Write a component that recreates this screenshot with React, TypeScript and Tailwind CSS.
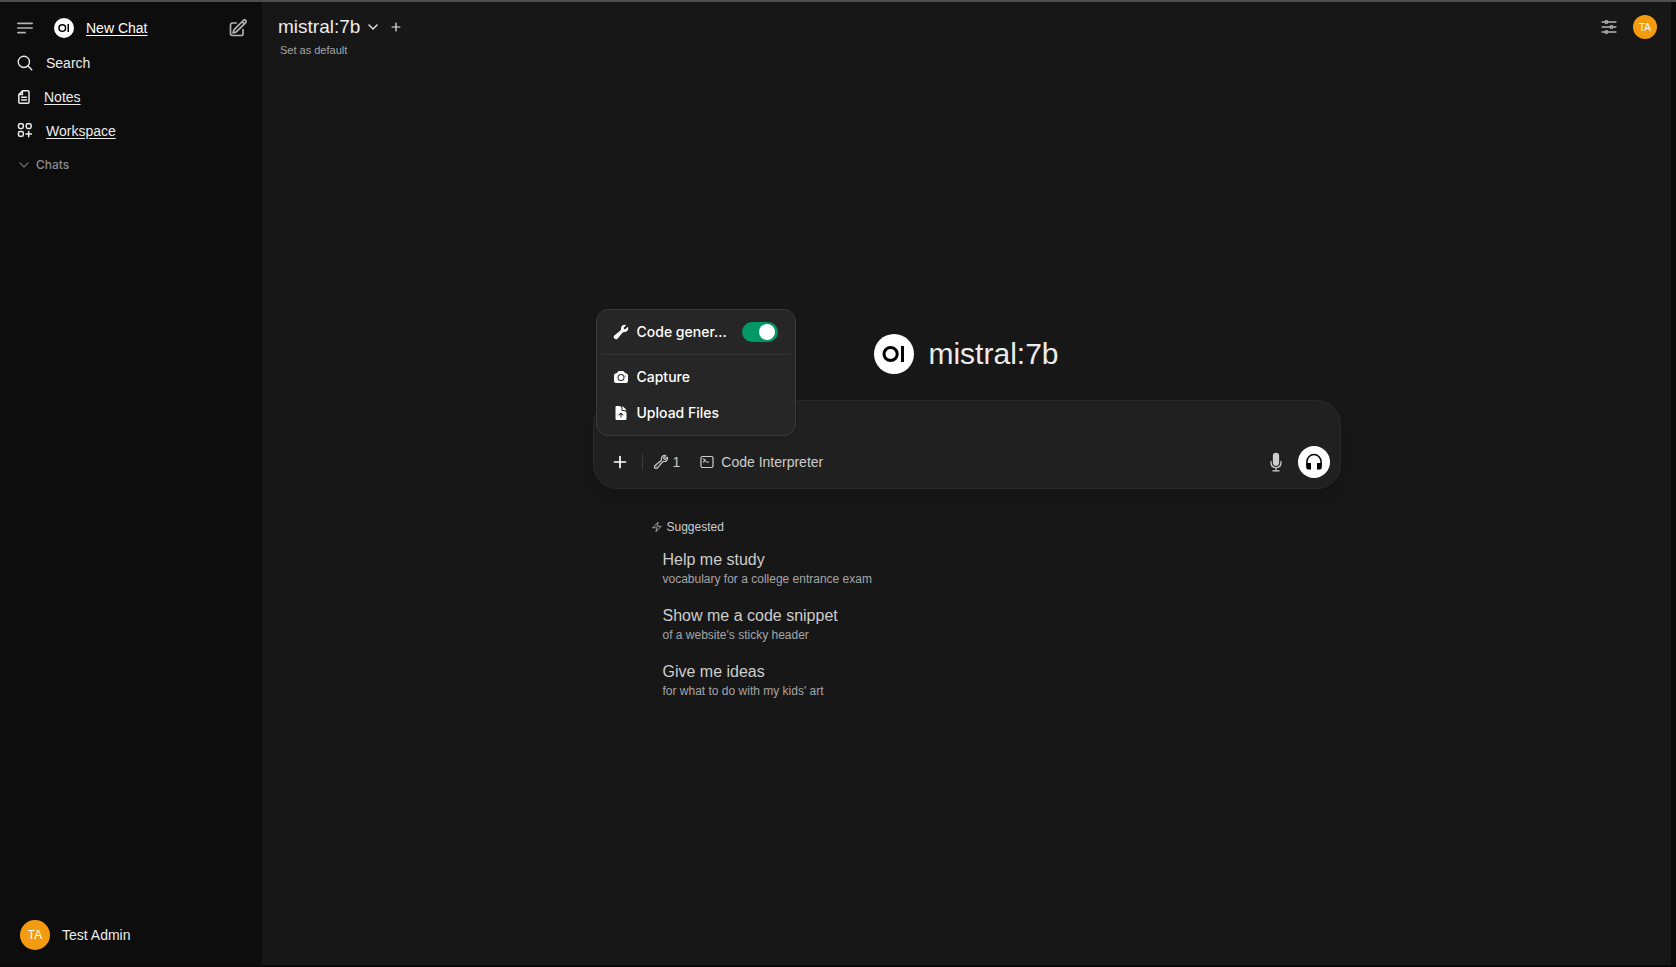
import { useState, type ReactNode } from 'react';
import {
  HiCamera,
  HiDocumentArrowUp,
  HiMicrophone,
  HiOutlineAdjustmentsHorizontal,
  HiOutlineBolt,
  HiOutlineCommandLine,
  HiOutlineMagnifyingGlass,
  HiOutlinePencilSquare,
  HiOutlineWrench,
} from 'react-icons/hi2';

function Logo({ className }: { className: string }) {
  return (
    <svg viewBox="0 0 40 40" className={className} aria-hidden="true">
      <circle cx="20" cy="20" r="20" fill="#fff" />
      <circle cx="16.6" cy="20" r="6.6" fill="none" stroke="#000" strokeWidth="3" />
      <rect x="27" y="12" width="3" height="16" fill="#000" />
    </svg>
  );
}

function MenuIcon() {
  return (
    <svg viewBox="0 0 20 20" className="size-5" fill="none" stroke="currentColor" strokeWidth="1.6" strokeLinecap="round" aria-hidden="true">
      <path d="M2.8 5.4h14.4M2.8 10h14.4M2.8 14.6h7.4" />
    </svg>
  );
}

function NoteIcon() {
  return (
    <svg viewBox="0 0 16 16" className="size-4" fill="none" stroke="currentColor" strokeWidth="1.5" strokeLinecap="round" strokeLinejoin="round" aria-hidden="true">
      <path d="M2.8 5.6 6.6 1.8h5.2a1.2 1.2 0 0 1 1.2 1.2v10a1.2 1.2 0 0 1-1.2 1.2H4A1.2 1.2 0 0 1 2.8 13zM6.4 2v3.6H3M5.6 8.3h4.8M5.6 11h4.8" />
    </svg>
  );
}

function WorkspaceIcon() {
  return (
    <svg viewBox="0 0 18 18" className="size-[18px]" fill="none" stroke="currentColor" strokeWidth="1.5" strokeLinecap="round" aria-hidden="true">
      <rect x="2.5" y="1.7" width="4.8" height="4.8" rx="1.4" />
      <rect x="10.3" y="1.7" width="4.8" height="4.8" rx="1.4" />
      <rect x="2.5" y="9.5" width="4.8" height="4.8" rx="1.4" />
      <path d="M12.7 9.4v5.4M10 12.1h5.4" />
    </svg>
  );
}

function WrenchSolidIcon() {
  return (
    <svg viewBox="0 0 20 20" className="size-4" fill="currentColor" aria-hidden="true">
      <path d="M19 5.5a4.5 4.5 0 0 1-4.791 4.49c-.873-.055-1.808.128-2.368.8l-6.024 7.23a2.724 2.724 0 1 1-3.837-3.837L9.21 8.16c.672-.56.855-1.495.8-2.368a4.5 4.5 0 0 1 5.873-4.575c.324.105.39.51.15.752L13.34 4.66a.455.455 0 0 0-.11.494 3.01 3.01 0 0 0 1.617 1.617c.17.07.363.02.493-.111l2.692-2.692c.241-.241.647-.174.752.15.14.435.216.9.216 1.382Z" />
    </svg>
  );
}

function HeadphonesIcon() {
  return (
    <svg viewBox="0 0 20 20" className="size-5" aria-hidden="true">
      <path d="M2.9 13V9.7a7.1 7.1 0 0 1 14.2 0V13" fill="none" stroke="currentColor" strokeWidth="1.5" />
      <path d="M2.2 11h4.8v6.4H4.2a2 2 0 0 1-2-2zM17.8 11H13v6.4h2.8a2 2 0 0 0 2-2z" fill="currentColor" />
    </svg>
  );
}

function ChevronIcon({ className }: { className: string }) {
  return (
    <svg viewBox="0 0 12 12" className={className} fill="none" stroke="currentColor" strokeWidth="1.4" strokeLinecap="round" strokeLinejoin="round" aria-hidden="true">
      <path d="M2 4l4 4 4-4" />
    </svg>
  );
}

function PlusIcon({ className }: { className: string }) {
  return (
    <svg viewBox="0 0 14 14" className={className} fill="none" stroke="currentColor" strokeWidth="1.7" strokeLinecap="round" aria-hidden="true">
      <path d="M7 1.5v11M1.5 7h11" />
    </svg>
  );
}

function Sidebar() {
  return (
    <aside className="flex w-[262px] shrink-0 flex-col bg-[#0d0d0d] pt-2 text-sm text-[#ececec]">
      <div className="flex h-9 items-center pl-[15px] pr-3.5">
        <button aria-label="Toggle sidebar" className="text-[#b4b4b4]">
          <MenuIcon />
        </button>
        <a href="#new" className="ml-[19px] flex items-center gap-3 text-white">
          <Logo className="size-5" />
          <span className="underline underline-offset-2">New Chat</span>
        </a>
        <button aria-label="Edit" className="ml-auto text-[#b4b4b4]">
          <HiOutlinePencilSquare className="size-5" strokeWidth="2" />
        </button>
      </div>
      <nav className="flex flex-col px-4">
        <button className="flex h-[34px] items-center gap-3 text-left">
          <HiOutlineMagnifyingGlass className="size-[18px]" strokeWidth="1.8" />
          Search
        </button>
        <a href="#notes" className="flex h-[34px] items-center gap-3 underline underline-offset-2">
          <NoteIcon />
          Notes
        </a>
        <a href="#workspace" className="flex h-[34px] items-center gap-3 underline underline-offset-2">
          <WorkspaceIcon />
          Workspace
        </a>
      </nav>
      <button className="flex h-[34px] items-center gap-1.5 px-[18px] font-['Inter',sans-serif] text-xs font-medium text-[#8e8e8e]">
        <ChevronIcon className="size-3 text-[#676767]" />
        Chats
      </button>
      <button className="mt-auto flex items-center gap-3 px-5 pb-[15px]">
        <span className="flex size-[30px] items-center justify-center rounded-full bg-[#f39c12] text-xs text-white">TA</span>
        Test Admin
      </button>
    </aside>
  );
}

function MenuItem({ icon, children }: { icon: ReactNode; children: ReactNode }) {
  return (
    <button className="flex h-9 items-center gap-2 rounded-lg px-3">
      {icon}
      {children}
    </button>
  );
}

function ToolMenu() {
  const [enabled, setEnabled] = useState(true);
  return (
    <div className="absolute bottom-[52px] left-0.5 flex w-[200px] flex-col rounded-xl border border-[#3a3a3a] bg-[#262626] p-1 font-['Inter',sans-serif] text-sm font-medium text-white shadow-sm">
      <label className="flex h-9 items-center gap-2 pl-3 pr-[13px]">
        <WrenchSolidIcon />
        <span className="flex-1 whitespace-nowrap">Code gener…</span>
        <input
          type="checkbox"
          role="switch"
          checked={enabled}
          onChange={(e) => setEnabled(e.target.checked)}
          className="peer sr-only"
        />
        <span className="flex h-5 w-9 items-center rounded-full bg-[#444] px-[3px] peer-checked:justify-end peer-checked:bg-[#009966]">
          <span className="size-4 rounded-full bg-white" />
        </span>
      </label>
      <hr className="my-1 border-[#333]" />
      <MenuItem icon={<HiCamera className="size-4" />}>Capture</MenuItem>
      <MenuItem icon={<HiDocumentArrowUp className="size-4" />}>Upload Files</MenuItem>
    </div>
  );
}

function Composer() {
  return (
    <form className="relative flex w-full flex-col rounded-3xl border border-[#292929] bg-[#202020] shadow-lg" onSubmit={(e) => e.preventDefault()}>
      <textarea aria-label="Message" rows={1} className="mx-4 mt-[9px] h-9 resize-none bg-transparent text-base text-white outline-none" />
      <div className="mb-2.5 flex items-center pl-[19px] pr-2.5 text-sm text-[#cdcdcd]">
        <button type="button" aria-label="More" className="text-white">
          <PlusIcon className="size-3.5" />
        </button>
        <span className="ml-[15px] h-4 w-px bg-[#3a3a3a]" />
        <button type="button" aria-label="Tools" className="ml-2.5 flex items-center gap-1">
          <HiOutlineWrench className="size-4" strokeWidth="1.8" />
          1
        </button>
        <button type="button" className="ml-[19px] flex items-center gap-1.5">
          <HiOutlineCommandLine className="size-4" strokeWidth="1.8" />
          Code Interpreter
        </button>
        <button type="button" aria-label="Dictate" className="ml-auto">
          <HiMicrophone className="size-5" />
        </button>
        <button type="button" aria-label="Call" className="ml-3 flex size-8 items-center justify-center rounded-full bg-white text-black">
          <HeadphonesIcon />
        </button>
      </div>
      <ToolMenu />
    </form>
  );
}

const suggestions = [
  { title: 'Help me study', text: 'vocabulary for a college entrance exam' },
  { title: 'Show me a code snippet', text: "of a website's sticky header" },
  { title: 'Give me ideas', text: "for what to do with my kids' art" },
];

export default function App() {
  return (
    <div className="flex min-h-screen border-t-2 border-b-2 border-t-[#4d4d4d] border-b-[#0a0708] bg-[#0a0a0a] pr-[5px] font-['Liberation_Sans',Arial,sans-serif]">
      <Sidebar />
      <div className="flex min-w-0 flex-1 flex-col bg-[#171717]">
        <header className="flex h-16 items-start justify-between pl-4 pr-3.5 pt-[13px]">
          <div>
            <div className="flex items-center text-[#ececec]">
              <button className="flex items-center gap-[7px] text-[19px] leading-6">
                mistral:7b
                <ChevronIcon className="size-3" />
              </button>
              <button aria-label="Add model" className="ml-3">
                <PlusIcon className="size-2.5" />
              </button>
            </div>
            <button className="ml-0.5 mt-[3px] block text-[11px] leading-4 text-[#a5a5a5]">Set as default</button>
          </div>
          <div className="flex items-center gap-3.5">
            <button aria-label="Controls" className="text-[#b4b4b4]">
              <HiOutlineAdjustmentsHorizontal className="size-5" strokeWidth="1.8" />
            </button>
            <button aria-label="Account" className="flex size-6 items-center justify-center rounded-full bg-[#f39c12] text-[10px] text-white">
              TA
            </button>
          </div>
        </header>
        <main className="mx-auto flex w-full max-w-[748px] flex-1 flex-col justify-center pt-3 text-[#cdcdcd]">
          <h1 className="flex items-center justify-center gap-3.5 text-3xl text-[#ececec]">
            <Logo className="size-10" />
            mistral:7b
          </h1>
          <div className="mt-[26px]">
            <Composer />
          </div>
          <section className="mt-7 px-14">
            <h2 className="flex items-center gap-1 pl-0.5 text-xs leading-5">
              <HiOutlineBolt className="size-3 text-[#a5a5a5]" strokeWidth="1.8" />
              Suggested
            </h2>
            <ul className="mt-1">
              {suggestions.map((item) => (
                <li key={item.title}>
                  <button className="flex h-14 w-full flex-col justify-center px-3.5 text-left">
                    <span className="text-base leading-5 text-[#cdcdcd]">{item.title}</span>
                    <span className="text-xs leading-[18px] text-[#a5a5a5]">{item.text}</span>
                  </button>
                </li>
              ))}
            </ul>
          </section>
        </main>
      </div>
    </div>
  );
}
